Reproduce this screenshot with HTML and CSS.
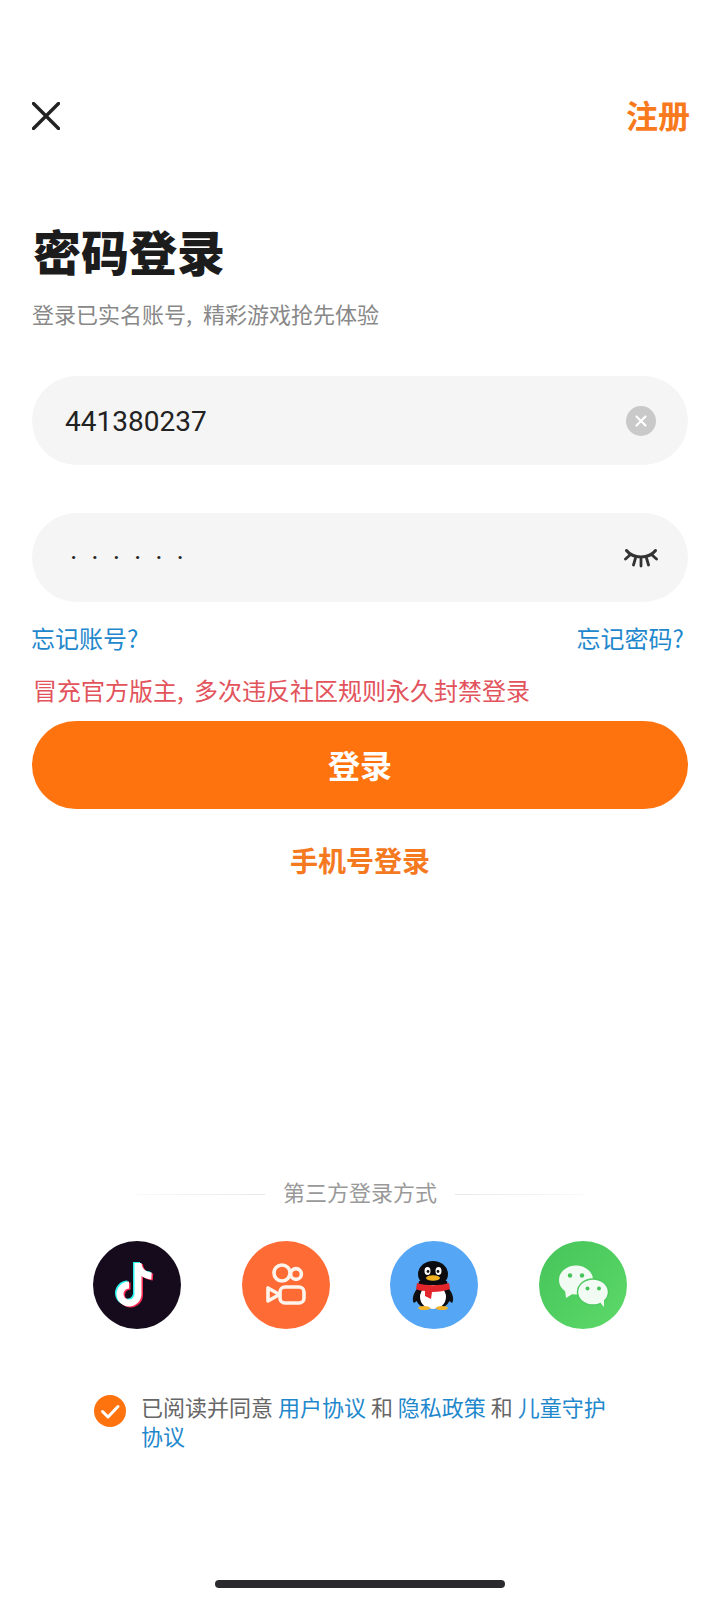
FILE: index.html
```html
<!DOCTYPE html>
<html lang="zh-CN">
<head>
    <meta charset="UTF-8">
    <meta name="viewport" content="width=device-width, initial-scale=1.0">
    <title>密码登录</title>
    <link rel="stylesheet" href="styles.css">
</head>
<body>
    <div class="page">
        <div class="topbar">
            <svg class="close-icon" width="28" height="28" viewBox="0 0 28 28">
                <path d="M1.5 1.5 L26.5 26.5 M26.5 1.5 L1.5 26.5" fill="none" stroke="#222" stroke-width="3.4" stroke-linecap="round"/>
            </svg>
            <span class="register">注册</span>
        </div>

        <h1 class="title">密码登录</h1>
        <p class="subtitle">登录已实名账号, 精彩游戏抢先体验</p>

        <div class="field field-first">
            <span class="field-value">441380237</span>
            <svg class="clear-icon" width="30" height="30" viewBox="0 0 30 30">
                <circle cx="15" cy="15" r="15" fill="#c9c9c9"/>
                <path d="M10.5 10.5 L19.5 19.5 M19.5 10.5 L10.5 19.5" fill="none" stroke="#fff" stroke-width="2.2" stroke-linecap="round"/>
            </svg>
        </div>

        <div class="field field-second">
            <span class="field-password">······</span>
            <svg class="eye-icon" width="34" height="20" viewBox="0 0 34 20">
                <path d="M2.500 2.500 C9 11 25 11 31.500 2.500" fill="none" stroke="#333" stroke-width="3" stroke-linecap="round"/>
                <path d="M1.500 11 L6 7 M32.500 11 L28 7 M9.500 17 L11.500 10 M17 18 L17 11 M24.500 17 L22.500 10" fill="none" stroke="#333" stroke-width="2.800" stroke-linecap="round"/>
            </svg>
        </div>

        <div class="forgot-row">
            <a class="link">忘记账号?</a>
            <a class="link">忘记密码?</a>
        </div>

        <p class="warning">冒充官方版主, 多次违反社区规则永久封禁登录</p>

        <button class="login-button">登录</button>

        <div class="phone-login">手机号登录</div>

        <div class="divider">
            <span class="divider-line divider-line-left"></span>
            <span class="divider-text">第三方登录方式</span>
            <span class="divider-line divider-line-right"></span>
        </div>

        <div class="social-row">
            <!-- 抖音 -->
            <svg class="social-icon" width="88" height="88" viewBox="0 0 88 88">
                <circle cx="44" cy="44" r="44" fill="#150b1c"/>
                <g fill="none" stroke-width="7">
                    <path d="M43.500 21 V52 A9 9 0 1 1 34.500 43 M43.500 22 C44.500 29 50 33.500 57 34" stroke="#25f4ee"/>
                    <path d="M46.500 23 V54 A9 9 0 1 1 37.500 45 M46.500 24 C47.500 31 53 35.500 60 36" stroke="#fe2c55"/>
                    <path d="M45 22 V53 A9 9 0 1 1 36 44 M45 23 C46 30 51.500 34.500 58.500 35" stroke="#fff"/>
                </g>
            </svg>
            <!-- 快手 -->
            <svg class="social-icon" width="88" height="88" viewBox="0 0 88 88">
                <circle cx="44" cy="44" r="44" fill="#ff6b35"/>
                <g fill="none" stroke="#fff4ec" stroke-width="3.600" stroke-linejoin="round">
                    <circle cx="40" cy="32" r="8"/>
                    <circle cx="54" cy="33" r="5.400"/>
                    <rect x="38" y="46" width="24" height="16" rx="5"/>
                    <path d="M37.500 53.500 L26 47 V60 Z"/>
                </g>
            </svg>
            <!-- QQ -->
            <svg class="social-icon" width="88" height="88" viewBox="0 0 88 88">
                <circle cx="44" cy="44" r="44" fill="#55a6f5"/>
                <path d="M29 46 C22 52 22 60 24 62 C27 60 29 58 31 56 Z M57 46 C64 52 64 60 62 62 C59 60 57 58 55 56 Z" fill="#111"/>
                <ellipse cx="43" cy="33" rx="15" ry="13" fill="#0c0c10"/>
                <path d="M29 40 H57 L60 58 C58 66 50 68 43 68 C36 68 28 66 26 58 Z" fill="#0c0c10"/>
                <ellipse cx="43" cy="56" rx="13" ry="12" fill="#fff"/>
                <ellipse cx="37.500" cy="30" rx="3" ry="4" fill="#fff"/>
                <ellipse cx="48.500" cy="30" rx="3" ry="4" fill="#fff"/>
                <circle cx="38" cy="30.500" r="1.400" fill="#111"/>
                <circle cx="48" cy="30.500" r="1.400" fill="#111"/>
                <ellipse cx="43" cy="37" rx="7" ry="2.800" fill="#f0b020"/>
                <path d="M27 42 C36 45 50 45 59 42 L60 48 C55 50 49 51 42 51 L41 58 L35 55 L35 50 C31 50 28 49 26 48 Z" fill="#e3262b"/>
                <ellipse cx="34" cy="67" rx="6" ry="2" fill="#f3b42a"/>
                <ellipse cx="52" cy="67" rx="6" ry="2" fill="#f3b42a"/>
            </svg>
            <!-- 微信 -->
            <svg class="social-icon" width="88" height="88" viewBox="0 0 88 88">
                <defs>
                    <linearGradient id="wechatBg" x1="0" y1="0" x2="1" y2="1">
                        <stop offset="0" stop-color="#46c45a"/>
                        <stop offset="1" stop-color="#5cd968"/>
                    </linearGradient>
                </defs>
                <circle cx="44" cy="44" r="44" fill="url(#wechatBg)"/>
                <ellipse cx="37" cy="39" rx="17" ry="14.500" fill="#f2fbf3"/>
                <path d="M26 49 L27 57 L35 52 Z" fill="#f2fbf3"/>
                <circle cx="31" cy="34.500" r="2.200" fill="#46c45a"/>
                <circle cx="43" cy="34.500" r="2.200" fill="#46c45a"/>
                <ellipse cx="54" cy="51" rx="15.500" ry="13" fill="#f2fbf3" stroke="#4bc95f" stroke-width="1.400"/>
                <path d="M60 60 L65 66 L65 56 Z" fill="#f2fbf3"/>
                <circle cx="48.500" cy="47.500" r="2" fill="#46c45a"/>
                <circle cx="60" cy="47.500" r="2" fill="#46c45a"/>
            </svg>
        </div>

        <div class="agreement">
            <svg class="check-icon" width="32" height="32" viewBox="0 0 32 32">
                <circle cx="16" cy="16" r="16" fill="#ff730f"/>
                <path d="M8.500 16.500 L14 22 L24 11.500" fill="none" stroke="#fff" stroke-width="3" stroke-linecap="round" stroke-linejoin="round"/>
            </svg>
            <p class="agreement-text">已阅读并同意 <a class="agreement-link">用户协议</a> 和 <a class="agreement-link">隐私政策</a> 和 <a class="agreement-link">儿童守护协议</a></p>
        </div>

        <div class="home-bar"></div>
    </div>
</body>
</html>
```

FILE: styles.css
```css
body {
    margin: 0;
    background-color: #fff;
    font-family: 'Noto Sans CJK SC', 'Liberation Sans', sans-serif;
    color: #222;
}
.page {
    width: 720px;
    height: 1600px;
    padding: 102px 32px 0;
    box-sizing: border-box;
    overflow: hidden;
}
.topbar {
    display: flex;
    justify-content: space-between;
    align-items: center;
    height: 28px;
}
.close-icon {
    display: block;
}
.register {
    margin-right: -2px;
    padding-bottom: 4px;
    font-size: 32px;
    font-weight: 700;
    color: #f97a1c;
    line-height: 28px;
}
.title {
    margin: 90px 0 0 1px;
    font-size: 48px;
    font-weight: 900;
    line-height: 60px;
    color: #1c1c1c;
}
.subtitle {
    margin: 18px 0 0;
    font-size: 22px;
    line-height: 30px;
    word-spacing: 6px;
    color: #888;
}
.field {
    display: flex;
    justify-content: space-between;
    align-items: center;
    height: 89px;
    padding: 0 32px 0 32px;
    background-color: #f5f5f5;
    border-radius: 45px;
}
.field-first {
    margin-top: 48px;
}
.field-second {
    margin-top: 48px;
}
.field-value {
    padding: 2px 0 0 1px;
    font-family: Roboto, sans-serif;
    font-size: 28px;
    color: #222;
}
.field-password {
    font-family: Roboto, sans-serif;
    font-size: 28px;
    letter-spacing: 14px;
    margin-left: 6px;
    color: #222;
}
.eye-icon {
    margin-right: -2px;
}
.forgot-row {
    display: flex;
    justify-content: space-between;
    margin-top: 21px;
    padding-right: 4px;
}
.link {
    margin-left: -1px;
    font-size: 24px;
    line-height: 30px;
    color: #1f88cc;
}
.warning {
    margin: 22px 0 0 1px;
    font-size: 24px;
    line-height: 30px;
    word-spacing: 5px;
    color: #e2535c;
}
.login-button {
    display: block;
    width: 100%;
    height: 88px;
    margin-top: 16px;
    padding: 0 0 3px;
    border: none;
    border-radius: 44px;
    background-color: #ff730f;
    color: #fff;
    font-family: inherit;
    font-size: 32px;
    font-weight: 700;
}
.phone-login {
    margin-top: 33px;
    font-size: 28px;
    font-weight: 700;
    line-height: 36px;
    text-align: center;
    color: #f5791f;
}
.divider {
    display: flex;
    justify-content: center;
    align-items: center;
    gap: 18px;
    margin-top: 301px;
    height: 30px;
}
.divider-line {
    width: 128px;
    height: 1px;
}
.divider-line-left {
    background: linear-gradient(to right, #f9f9f9, #e8e8e8);
}
.divider-line-right {
    background: linear-gradient(to left, #f9f9f9, #e8e8e8);
}
.divider-text {
    padding-bottom: 6px;
    font-size: 22px;
    line-height: 30px;
    color: #999;
}
.social-row {
    display: flex;
    justify-content: center;
    gap: 60.6px;
    margin-top: 32px;
}
.social-icon {
    display: block;
}
.agreement {
    display: flex;
    align-items: flex-start;
    gap: 15px;
    height: 58px;
    margin-top: 65px;
    padding-left: 62px;
}
.check-icon {
    flex: none;
    margin-top: 1px;
}
.agreement-text {
    width: 480px;
    margin: -2px 0 0;
    font-size: 22px;
    line-height: 29px;
    color: #666;
}
.agreement-link {
    color: #1f88cc;
}
.home-bar {
    width: 290px;
    height: 8px;
    margin: 128px auto 0;
    border-radius: 4px;
    background-color: #2a2a2e;
}
```
